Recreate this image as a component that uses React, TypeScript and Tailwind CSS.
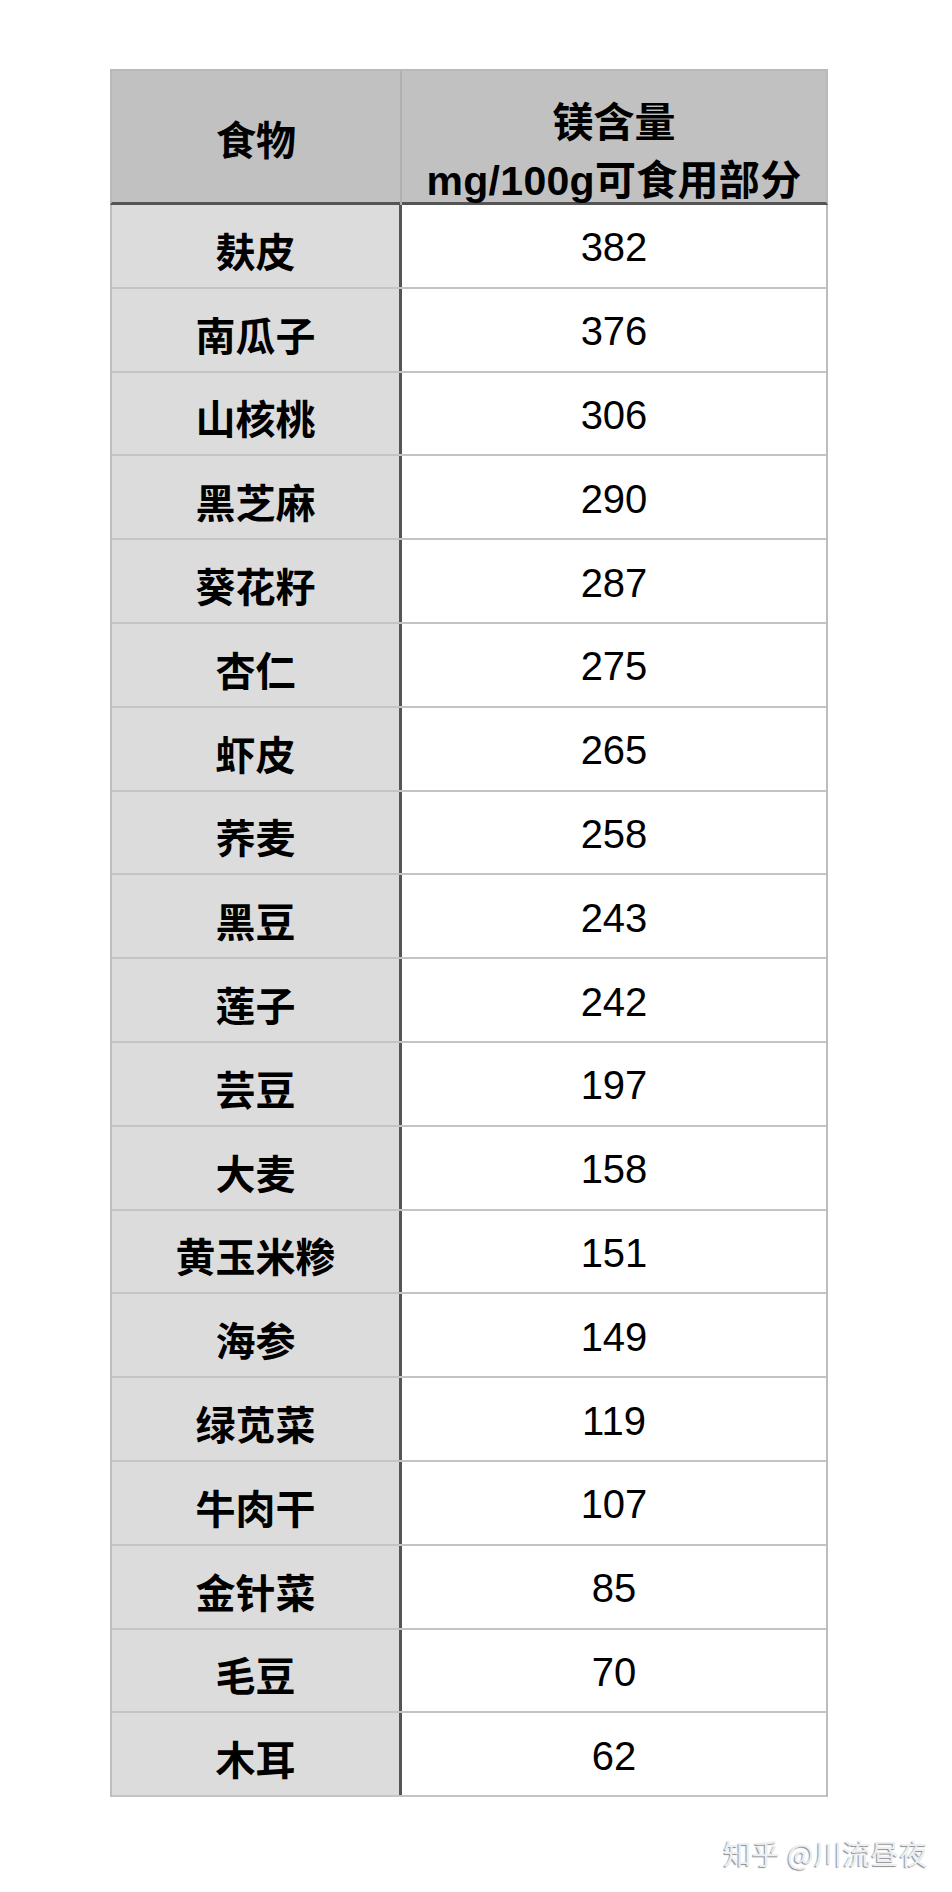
const rows: [string, number][] = [
  ["麸皮", 382],
  ["南瓜子", 376],
  ["山核桃", 306],
  ["黑芝麻", 290],
  ["葵花籽", 287],
  ["杏仁", 275],
  ["虾皮", 265],
  ["荞麦", 258],
  ["黑豆", 243],
  ["莲子", 242],
  ["芸豆", 197],
  ["大麦", 158],
  ["黄玉米糁", 151],
  ["海参", 149],
  ["绿苋菜", 119],
  ["牛肉干", 107],
  ["金针菜", 85],
  ["毛豆", 70],
  ["木耳", 62],
];

export default function App() {
  return (
    <div className="w-[952px] h-[1892px] bg-white flex flex-col font-['Liberation_Sans','Noto_Sans_CJK_SC',sans-serif] text-black">
      <div className="ml-[110px] mt-[69px] w-[718px]">
        {/* header */}
        <div className="grid grid-cols-[290px_424px] h-[136px] bg-[#c1c1c1] border-t-[2px] border-l-[2px] border-r-[2px] border-[#b9b9b9] border-b-[3px] border-b-[#555555]">
          <div className="flex items-center justify-center border-r-[2px] border-[#b0b0b0] font-['Noto_Sans_CJK_SC',sans-serif] font-bold text-[40px] leading-none">
            食物
          </div>
          <div className="text-center pt-[24px] font-bold text-[41px]">
            <div className="leading-[48px] font-['Noto_Sans_CJK_SC',sans-serif]">镁含量</div>
            <div className="leading-[48px] mt-[14px] tracking-[0.3px]">mg/100g可食用部分</div>
          </div>
        </div>
        {/* body */}
        <div className="border-l-[2px] border-r-[2px] border-[#bdbdbd]">
          {rows.map(([name, value]) => (
            <div key={name} className="grid grid-cols-[290px_424px] h-[83.8px] border-b-[2px] border-[#c4c4c4]">
              <div className="bg-[#dcdcdc] border-r-[3px] border-[#555555] flex items-center justify-center pt-[8px] font-['Noto_Sans_CJK_SC',sans-serif] font-bold text-[40px] leading-none">
                {name}
              </div>
              <div className="flex items-center justify-center pt-[3px] text-[40px] leading-none">
                {value}
              </div>
            </div>
          ))}
        </div>
      </div>
      <div className="flex justify-end pr-[24px] mt-[39px]">
        <span className="font-['Noto_Sans_CJK_SC',sans-serif] text-[28px] leading-[34px] tracking-[0.5px] text-[#eeeeee] [text-shadow:-1px_1px_1px_rgba(0,0,0,0.45)]">
          知乎 @川流昼夜
        </span>
      </div>
    </div>
  );
}
